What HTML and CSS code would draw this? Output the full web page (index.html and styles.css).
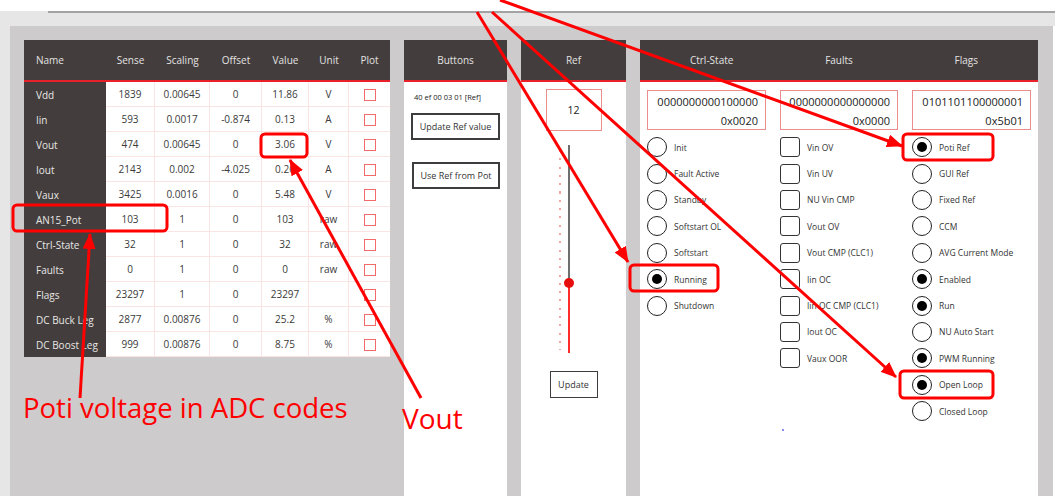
FILE: index.html
```html
<!DOCTYPE html>
<html>
<head>
<meta charset="utf-8">
<link rel="stylesheet" href="styles.css">
</head>
<body>
<div class="page">
  <div class="topbar"><div class="topline"></div></div>
  <div class="main">
    <div class="table-wrap">
      <table class="sig">
        <colgroup>
          <col style="width:82px"><col style="width:49px"><col style="width:55px"><col style="width:52px"><col style="width:47px"><col style="width:40px"><col style="width:41px">
        </colgroup>
        <thead>
          <tr><th class="name">Name</th><th>Sense</th><th>Scaling</th><th>Offset</th><th>Value</th><th>Unit</th><th>Plot</th></tr>
        </thead>
        <tbody>
          <tr><td class="name">Vdd</td><td>1839</td><td>0.00645</td><td>0</td><td>11.86</td><td>V</td><td><span class="plot"></span></td></tr>
          <tr><td class="name">Iin</td><td>593</td><td>0.0017</td><td>-0.874</td><td>0.13</td><td>A</td><td><span class="plot"></span></td></tr>
          <tr><td class="name">Vout</td><td>474</td><td>0.00645</td><td>0</td><td>3.06</td><td>V</td><td><span class="plot"></span></td></tr>
          <tr><td class="name">Iout</td><td>2143</td><td>0.002</td><td>-4.025</td><td>0.26</td><td>A</td><td><span class="plot"></span></td></tr>
          <tr><td class="name">Vaux</td><td>3425</td><td>0.0016</td><td>0</td><td>5.48</td><td>V</td><td><span class="plot"></span></td></tr>
          <tr><td class="name">AN15_Pot</td><td>103</td><td>1</td><td>0</td><td>103</td><td>raw</td><td><span class="plot"></span></td></tr>
          <tr><td class="name">Ctrl-State</td><td>32</td><td>1</td><td>0</td><td>32</td><td>raw</td><td><span class="plot"></span></td></tr>
          <tr><td class="name">Faults</td><td>0</td><td>1</td><td>0</td><td>0</td><td>raw</td><td><span class="plot"></span></td></tr>
          <tr><td class="name">Flags</td><td>23297</td><td>1</td><td>0</td><td>23297</td><td></td><td><span class="plot"></span></td></tr>
          <tr><td class="name">DC Buck Leg</td><td>2877</td><td>0.00876</td><td>0</td><td>25.2</td><td>%</td><td><span class="plot"></span></td></tr>
          <tr><td class="name">DC Boost Leg</td><td>999</td><td>0.00876</td><td>0</td><td>8.75</td><td>%</td><td><span class="plot"></span></td></tr>
        </tbody>
      </table>
    </div>

    <section class="panel buttons">
      <div class="phead">Buttons</div>
      <div class="pbody">
        <div class="cmd">40 ef 00 03 01 [Ref]</div>
        <div class="btn btn-wide">Update Ref value</div>
        <div class="btn btn-wide btn-second">Use Ref from Pot</div>
      </div>
    </section>

    <section class="panel ref">
      <div class="phead">Ref</div>
      <div class="pbody refbody">
        <div class="refbox">12</div>
        <div class="slider">
          <div class="ticks"></div>
          <div class="track">
            <div class="track-top"></div>
            <div class="track-bot"></div>
            <span class="thumb"></span>
          </div>
        </div>
        <div class="btn btn-upd">Update</div>
      </div>
    </section>

    <section class="panel status">
      <div class="phead cols"><span>Ctrl-State</span><span>Faults</span><span>Flags</span></div>
      <div class="scols">
        <div class="scol">
          <div class="bits"><div>0000000000100000</div><div>0x0020</div></div>
          <ul class="items">
            <li><span class="radio"></span>Init</li>
            <li><span class="radio"></span>Fault Active</li>
            <li><span class="radio"></span>Standby</li>
            <li><span class="radio"></span>Softstart OL</li>
            <li><span class="radio"></span>Softstart</li>
            <li><span class="radio on"></span>Running</li>
            <li><span class="radio"></span>Shutdown</li>
          </ul>
        </div>
        <div class="scol">
          <div class="bits"><div>0000000000000000</div><div>0x0000</div></div>
          <ul class="items">
            <li><span class="check"></span>Vin OV</li>
            <li><span class="check"></span>Vin UV</li>
            <li><span class="check"></span>NU Vin CMP</li>
            <li><span class="check"></span>Vout OV</li>
            <li><span class="check"></span>Vout CMP (CLC1)</li>
            <li><span class="check"></span>Iin OC</li>
            <li><span class="check"></span>Iin OC CMP (CLC1)</li>
            <li><span class="check"></span>Iout OC</li>
            <li><span class="check"></span>Vaux OOR</li>
          </ul>
          <div class="dot"></div>
        </div>
        <div class="scol">
          <div class="bits"><div>0101101100000001</div><div>0x5b01</div></div>
          <ul class="items">
            <li><span class="radio on"></span>Poti Ref</li>
            <li><span class="radio"></span>GUI Ref</li>
            <li><span class="radio"></span>Fixed Ref</li>
            <li><span class="radio"></span>CCM</li>
            <li><span class="radio"></span>AVG Current Mode</li>
            <li><span class="radio on"></span>Enabled</li>
            <li><span class="radio on"></span>Run</li>
            <li><span class="radio"></span>NU Auto Start</li>
            <li><span class="radio on"></span>PWM Running</li>
            <li><span class="radio on"></span>Open Loop</li>
            <li><span class="radio"></span>Closed Loop</li>
          </ul>
        </div>
      </div>
    </section>
  </div>

  <svg class="annot" width="1055" height="498" viewBox="0 0 1055 498">
    <defs>
      <marker id="ah" markerUnits="userSpaceOnUse" markerWidth="16" markerHeight="13" refX="15" refY="6.5" orient="auto">
        <path d="M0,0 L16,6.5 L0,13 Z" fill="#ff0000"/>
      </marker>
    </defs>
    <g fill="none" stroke="#ff0000" stroke-width="3">
      <rect x="13" y="205" width="154" height="26" rx="4"/>
      <rect x="261" y="134" width="46" height="23" rx="4"/>
      <rect x="630" y="265" width="88" height="26" rx="4"/>
      <rect x="903" y="134" width="90" height="26" rx="4"/>
      <rect x="900" y="371" width="93" height="27" rx="4"/>
      <line x1="80" y1="398" x2="90" y2="234" marker-end="url(#ah)"/>
      <line x1="421" y1="398" x2="290" y2="160" marker-end="url(#ah)"/>
      <line x1="477" y1="12" x2="628" y2="262" marker-end="url(#ah)"/>
      <line x1="492" y1="12" x2="896" y2="377" marker-end="url(#ah)"/>
      <line x1="500" y1="0" x2="902" y2="146" marker-end="url(#ah)"/>
    </g>
  </svg>
  <div class="note note-poti">Poti voltage in ADC codes</div>
  <div class="note note-vout">Vout</div>
</div>
</body>
</html>
```

FILE: styles.css
```css
* { box-sizing: border-box; }
html, body { margin: 0; padding: 0; background: #ffffff; }
body { font-family: "Open Sans", "Noto Sans", sans-serif; color: #333; }

.page {
  position: relative;
  width: 1055px;
  height: 498px;
  overflow: hidden;
  background: #ffffff;
}

.topbar {
  margin-top: 11px;
  height: 15px;
  background: #e7e6e7;
}
.topline {
  margin-left: 48px;
  height: 2px;
  background: #a3a3a3;
}

.main {
  display: flex;
  gap: 14px;
  width: 1053px;
  height: 470px;
  padding: 14px 15px 0 14px;
  border-left: 10px solid #e7e6e7;
  background: #cdcbcc;
}

/* ---------- table ---------- */
.table-wrap { width: 366px; flex: none; }
.sig {
  width: 366px;
  table-layout: fixed;
  border-collapse: separate;
  border-spacing: 0;
  font-size: 10px;
}
.sig th {
  height: 42px;
  padding: 0;
  background: #433e3d;
  color: #e4e2e2;
  font-weight: normal;
  text-align: center;
  border-bottom: 2px solid #e8202a;
}
.sig th.name { text-align: left; padding-left: 12px; }
.sig tbody tr { height: 25px; }
.sig td {
  padding: 0;
  background: #ffffff;
  text-align: center;
  color: #3a3a3a;
  border-bottom: 1px solid #fbe4e4;
  border-right: 1px solid #fbe4e4;
}
.sig td:last-child { border-right: none; }
.sig td.name {
  background: #433e3d;
  color: #e8e6e6;
  text-align: left;
  padding-left: 12px;
  border: none;
  white-space: nowrap;
  overflow: hidden;
}
.plot {
  display: inline-block;
  width: 12px;
  height: 12px;
  border: 1.5px solid #f26a6a;
  vertical-align: middle;
}

/* ---------- panels ---------- */
.panel {
  background: #ffffff;
  display: flex;
  flex-direction: column;
  flex: none;
}
.buttons { width: 103px; }
.ref { width: 105px; }
.status { width: 398px; }

.phead {
  height: 42px;
  background: #433e3d;
  border-bottom: 2px solid #e8202a;
  color: #e4e2e2;
  font-size: 10px;
  display: flex;
  align-items: center;
  justify-content: center;
}
.phead.cols { justify-content: space-around; padding: 0 8px; }
.phead.cols span { width: 132px; text-align: center; }

.buttons .pbody { padding: 10px 0 0 7px; }
.cmd { font-size: 7.5px; padding-left: 3px; height: 21px; color: #222; }
.btn {
  border: 2px solid #3d3d3d;
  display: flex;
  align-items: center;
  justify-content: center;
  color: #333;
  background: #fff;
}
.btn-wide { width: 89px; height: 27px; font-size: 9px; }
.btn-second { margin-top: 22px; margin-left: 1px; width: 88px; }

.refbody { display: flex; flex-direction: column; align-items: center; padding-top: 7px; }
.refbox {
  width: 56px;
  height: 42px;
  border: 1px solid #ec8d8d;
  display: flex;
  align-items: center;
  justify-content: center;
  font-size: 10.5px;
  color: #222;
}
.slider {
  align-self: flex-start;
  margin: 14px 0 0 38px;
  display: flex;
  gap: 7px;
  height: 208px;
}
.ticks {
  width: 2px;
  height: 200px;
  margin-top: 5px;
  background: repeating-linear-gradient(to bottom, #f5a4a4 0 2px, transparent 2px 8.3px);
}
.track {
  position: relative;
  width: 2px;
  display: flex;
  flex-direction: column;
}
.track-top { flex: 137; background: #6e6e6e; }
.track-bot { flex: 71; background: #ff2a2a; }
.thumb {
  position: absolute;
  left: -4px;
  top: 133px;
  width: 10px;
  height: 10px;
  border-radius: 50%;
  background: #e60d0d;
}
.btn-upd {
  margin-top: 18px;
  width: 48px;
  height: 27px;
  font-size: 9px;
  border-width: 1.5px;
}

/* ---------- status ---------- */
.scols {
  display: grid;
  grid-template-columns: 133px 132px 133px;
  padding-top: 8px;
}
.scol { padding: 0 7px; }
.bits {
  height: 40px;
  border: 1px solid #ec8d8d;
  font-size: 11px;
  text-align: right;
  padding: 1px 7px 0 0;
  line-height: 19px;
  color: #222;
}
.items {
  list-style: none;
  margin: 4px 0 0 0;
  padding: 0;
}
.items li {
  height: 26.4px;
  display: flex;
  align-items: center;
  font-size: 8.5px;
  color: #333;
  white-space: nowrap;
}
.radio, .check {
  flex: none;
  width: 20px;
  height: 20px;
  margin-right: 7px;
  border: 1.5px solid #222;
  background: #fff;
  display: flex;
  align-items: center;
  justify-content: center;
}
.radio { border-radius: 50%; }
.radio.on::after {
  content: "";
  width: 10px;
  height: 10px;
  border-radius: 50%;
  background: #000;
}
.check { border-radius: 3px; border-color: #333; }
.dot {
  width: 2px;
  height: 2px;
  margin: 57px 0 0 2px;
  background: #8a8af0;
}

/* ---------- annotations ---------- */
.annot {
  position: absolute;
  left: 0;
  top: 0;
  pointer-events: none;
}
.note {
  position: absolute;
  color: #ff0000;
  font-family: "Open Sans", sans-serif;
  white-space: nowrap;
  line-height: 1;
}
.note-poti { left: 23px; top: 394px; font-size: 27.5px; }
.note-vout { left: 402px; top: 404px; font-size: 28px; }
```
